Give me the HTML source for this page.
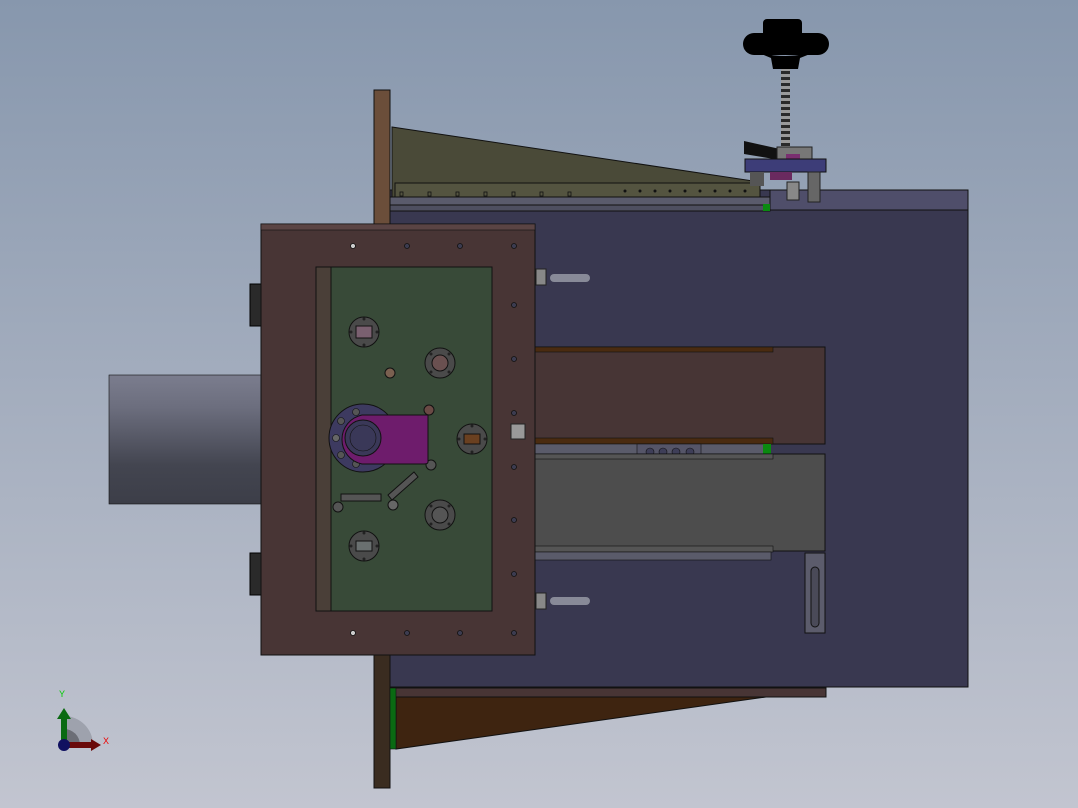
<!DOCTYPE html>
<html><head><meta charset="utf-8"><style>html,body{margin:0;padding:0;width:1078px;height:808px;overflow:hidden}svg{display:block}</style></head>
<body>
<svg width="1078" height="808" viewBox="0 0 1078 808" xmlns="http://www.w3.org/2000/svg">
<defs>
<linearGradient id="bg" x1="0" y1="0" x2="0" y2="1"><stop offset="0" stop-color="#8797ad"/><stop offset="1" stop-color="#c2c5d0"/></linearGradient>
<linearGradient id="cyl" x1="0" y1="0" x2="0" y2="1"><stop offset="0" stop-color="#7b7d8e"/><stop offset="0.25" stop-color="#6c6e7e"/><stop offset="0.7" stop-color="#434550"/><stop offset="1" stop-color="#3c3e48"/></linearGradient>
<linearGradient id="scr" x1="0" y1="0" x2="1" y2="0"><stop offset="0" stop-color="#222"/><stop offset="0.5" stop-color="#999"/><stop offset="1" stop-color="#222"/></linearGradient>
<pattern id="thread" width="9" height="6" patternUnits="userSpaceOnUse"><rect width="9" height="6" fill="#2a2a2a"/><rect y="2" width="9" height="3" fill="#9a9a9a"/></pattern>
</defs>
<rect width="1078" height="808" fill="url(#bg)"/>

<rect x="390" y="190" width="578" height="497" fill="#393850" stroke="#111" stroke-width="1"/>
<rect x="770" y="190" width="198" height="20" fill="#4f4e6a" stroke="#111" stroke-width="1"/>

<polygon points="392,127 760,182 760,197 392,197" fill="#4a4a38" stroke="#111" stroke-width="1"/>
<rect x="395" y="183" width="365" height="14" fill="#545440" stroke="#111" stroke-width="1"/>
<g fill="none" stroke="#111" stroke-width="0.8">
<rect x="400" y="192" width="3" height="4"/><rect x="428" y="192" width="3" height="4"/><rect x="456" y="192" width="3" height="4"/><rect x="484" y="192" width="3" height="4"/><rect x="512" y="192" width="3" height="4"/><rect x="540" y="192" width="3" height="4"/><rect x="568" y="192" width="3" height="4"/>
</g>
<rect x="390" y="197" width="380" height="8" fill="#5a5b6c" stroke="#111" stroke-width="1"/>
<rect x="390" y="205" width="380" height="6" fill="#4e4f60" stroke="#111" stroke-width="1"/>
<rect x="763" y="204" width="7" height="7" fill="#0a8a10"/>
<g fill="#111">
<circle cx="625" cy="191" r="1.5"/><circle cx="640" cy="191" r="1.5"/><circle cx="655" cy="191" r="1.5"/><circle cx="670" cy="191" r="1.5"/><circle cx="685" cy="191" r="1.5"/><circle cx="700" cy="191" r="1.5"/><circle cx="715" cy="191" r="1.5"/><circle cx="730" cy="191" r="1.5"/><circle cx="745" cy="191" r="1.5"/>
</g>

<rect x="781" y="66" width="9" height="82" fill="url(#thread)"/>
<rect x="763" y="19" width="39" height="18" rx="4" fill="#000"/>
<rect x="743" y="33" width="86" height="22" rx="11" fill="#000"/>
<path d="M752,50 Q785,62 820,50 L800,58 L798,69 L773,69 L771,58 Z" fill="#000"/>
<polygon points="744,141 780,149 780,160 744,154" fill="#111"/>
<rect x="777" y="147" width="35" height="14" fill="#777" stroke="#222"/>
<rect x="786" y="154" width="14" height="6" fill="#7a2f70"/>
<rect x="745" y="159" width="81" height="13" fill="#3d3d78" stroke="#111"/>
<rect x="750" y="172" width="14" height="14" fill="#555"/>
<rect x="770" y="172" width="22" height="8" fill="#6a2a5f"/>
<rect x="808" y="172" width="12" height="30" fill="#666" stroke="#222"/>
<rect x="787" y="182" width="12" height="18" fill="#888" stroke="#222"/>

<rect x="374" y="90" width="16" height="134" fill="#6b4e3a" stroke="#111"/>
<rect x="374" y="655" width="16" height="133" fill="#3a2c20" stroke="#111"/>

<rect x="535" y="347" width="290" height="97" fill="#473535" stroke="#111"/>
<rect x="535" y="347" width="238" height="5" fill="#4a2b10" stroke="#111" stroke-width="0.6"/>
<rect x="535" y="438" width="238" height="6" fill="#4a2b10" stroke="#111" stroke-width="0.6"/>
<rect x="535" y="444" width="235" height="10" fill="#5a5b6a" stroke="#111" stroke-width="0.6"/>
<rect x="637" y="444" width="64" height="10" fill="#555568" stroke="#111" stroke-width="0.6"/>
<g fill="#3e3e58" stroke="#111" stroke-width="0.6"><circle cx="650" cy="452" r="4"/><circle cx="663" cy="452" r="4"/><circle cx="676" cy="452" r="4"/><circle cx="690" cy="452" r="4"/></g>
<rect x="763" y="444" width="8" height="10" fill="#0a8a10"/>
<rect x="535" y="454" width="290" height="97" fill="#4d4d4d" stroke="#111"/>
<rect x="535" y="454" width="238" height="5" fill="#555" stroke="#111" stroke-width="0.6"/>
<rect x="535" y="546" width="238" height="6" fill="#555" stroke="#111" stroke-width="0.6"/>
<rect x="535" y="552" width="236" height="8" fill="#5a5b6a" stroke="#111" stroke-width="0.6"/>
<rect x="805" y="553" width="20" height="80" fill="#5c5c6c" stroke="#111"/>
<rect x="811" y="567" width="8" height="60" rx="4" fill="#4a4a58" stroke="#111"/>

<g><rect x="536" y="269" width="10" height="16" fill="#888" stroke="#222"/><rect x="550" y="274" width="40" height="8" rx="4" fill="#888a98"/>
<rect x="536" y="593" width="10" height="16" fill="#888" stroke="#222"/><rect x="550" y="597" width="40" height="8" rx="4" fill="#888a98"/></g>

<rect x="390" y="688" width="436" height="9" fill="#483535" stroke="#111"/>
<polygon points="396,697 766,697 396,749" fill="#3e2410" stroke="#111"/>
<rect x="390" y="688" width="6" height="61" fill="#0a6a12" stroke="#111" stroke-width="0.6"/>

<rect x="109" y="375" width="152" height="129" fill="url(#cyl)" stroke="#111" stroke-width="0.6"/>
<rect x="250" y="284" width="11" height="42" fill="#2a2a2a" stroke="#000"/>
<rect x="250" y="553" width="11" height="42" fill="#2a2a2a" stroke="#000"/>

<rect x="261" y="224" width="274" height="431" fill="#483535" stroke="#111"/>
<rect x="261" y="224" width="274" height="6" fill="#5a4444" stroke="#111" stroke-width="0.6"/>
<rect x="316" y="267" width="176" height="344" fill="#384a38" stroke="#111"/>
<rect x="316" y="267" width="15" height="344" fill="#4a3f38" stroke="#111"/>
<g fill="#3c3c50" stroke="#111" stroke-width="0.8">
<circle cx="353" cy="246" r="2.5" fill="#ccc"/><circle cx="407" cy="246" r="2.5"/><circle cx="460" cy="246" r="2.5"/><circle cx="514" cy="246" r="2.5"/>
<circle cx="353" cy="633" r="2.5" fill="#ccc"/><circle cx="407" cy="633" r="2.5"/><circle cx="460" cy="633" r="2.5"/><circle cx="514" cy="633" r="2.5"/>
<circle cx="514" cy="305" r="2.5"/><circle cx="514" cy="359" r="2.5"/><circle cx="514" cy="413" r="2.5"/><circle cx="514" cy="467" r="2.5"/><circle cx="514" cy="520" r="2.5"/><circle cx="514" cy="574" r="2.5"/>
</g>
<rect x="511" y="424" width="14" height="15" fill="#999" stroke="#222"/>

<g stroke="#111" stroke-width="1">
<circle cx="364" cy="332" r="15" fill="#4a4a4a"/><rect x="356" y="326" width="16" height="12" fill="#7a6070"/>
<circle cx="440" cy="363" r="15" fill="#4a4a4a"/><circle cx="440" cy="363" r="8" fill="#6a5050"/>
<circle cx="472" cy="439" r="15" fill="#4a4a4a"/><rect x="464" y="434" width="16" height="10" fill="#6a4020"/>
<circle cx="440" cy="515" r="15" fill="#4a4a4a"/><circle cx="440" cy="515" r="8" fill="#555"/>
<circle cx="364" cy="546" r="15" fill="#4a4a4a"/><rect x="356" y="541" width="16" height="10" fill="#6a7070"/>
<circle cx="390" cy="373" r="5" fill="#7a6050"/>
<circle cx="429" cy="410" r="5" fill="#6a4a45"/>
<circle cx="431" cy="465" r="5" fill="#555"/>
<circle cx="338" cy="507" r="5" fill="#555"/>
<circle cx="393" cy="505" r="5" fill="#666"/>
</g>
<g fill="#222">
<circle cx="364" cy="319" r="1.5"/><circle cx="364" cy="345" r="1.5"/><circle cx="351" cy="332" r="1.5"/><circle cx="377" cy="332" r="1.5"/>
<circle cx="431" cy="354" r="1.5"/><circle cx="449" cy="354" r="1.5"/><circle cx="431" cy="372" r="1.5"/><circle cx="449" cy="372" r="1.5"/>
<circle cx="472" cy="426" r="1.5"/><circle cx="472" cy="452" r="1.5"/><circle cx="459" cy="439" r="1.5"/><circle cx="485" cy="439" r="1.5"/>
<circle cx="431" cy="506" r="1.5"/><circle cx="449" cy="506" r="1.5"/><circle cx="431" cy="524" r="1.5"/><circle cx="449" cy="524" r="1.5"/>
<circle cx="364" cy="533" r="1.5"/><circle cx="364" cy="559" r="1.5"/><circle cx="351" cy="546" r="1.5"/><circle cx="377" cy="546" r="1.5"/>
</g>
<circle cx="363" cy="438" r="34" fill="#3d3a60" stroke="#111"/>
<g fill="#555" stroke="#111" stroke-width="0.6"><circle cx="341" cy="421" r="3.5"/><circle cx="336" cy="438" r="3.5" fill="#666"/><circle cx="341" cy="455" r="3.5"/><circle cx="356" cy="412" r="3.5"/><circle cx="356" cy="464" r="3.5"/></g>
<path d="M362,415 H428 V462 Q428,464 424,464 H362 A25,25 0 0 1 362,415 Z" fill="#6e1c6c" stroke="#111"/>
<circle cx="363" cy="438" r="18" fill="#3a3858" stroke="#111"/>
<circle cx="363" cy="438" r="13" fill="#3a3858" stroke="#111" stroke-width="0.6"/>
<rect x="341" y="494" width="40" height="7" fill="#555" stroke="#111"/>
<polygon points="388,495 414,472 418,477 392,500" fill="#555" stroke="#111"/>

<path d="M64,745 L64,716 A29,29 0 0 1 93,745 Z" fill="#9ea2ad"/>
<path d="M64,745 L64,729 A16,16 0 0 1 80,745 Z" fill="#6c6e76"/>
<rect x="61" y="718" width="6" height="27" fill="#0a6a12"/>
<polygon points="57,719 64,708 71,719" fill="#0a6a12"/>
<rect x="64" y="742" width="28" height="6" fill="#6a0a0a"/>
<polygon points="91,739 101,745 91,751" fill="#6a0a0a"/>
<circle cx="64" cy="745" r="6" fill="#101060"/>
<text x="59" y="697" font-family="Liberation Sans, sans-serif" font-size="9" fill="#0c0">Y</text>
<text x="103" y="744" font-family="Liberation Sans, sans-serif" font-size="9" fill="#e00">X</text>
</svg>
</body></html>
